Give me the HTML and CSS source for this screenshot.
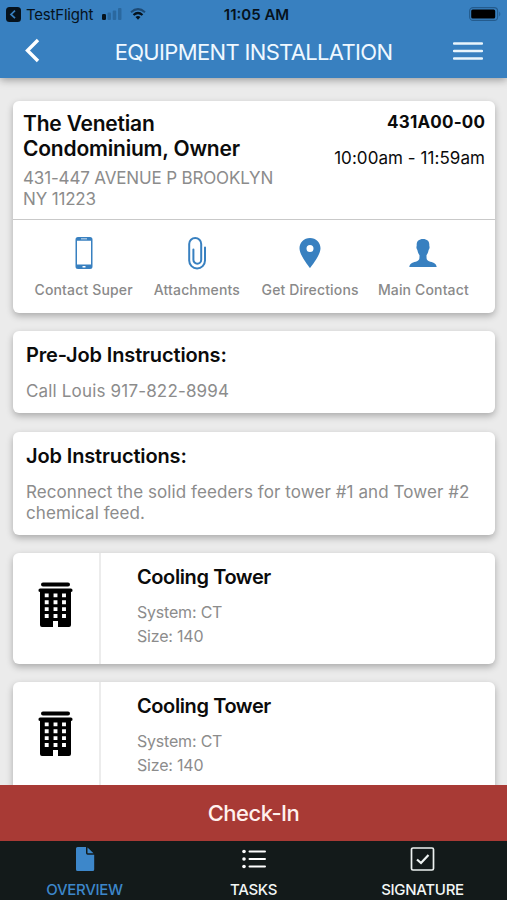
FILE: index.html
```html
<!DOCTYPE html>
<html lang="en">
<head>
<meta charset="utf-8">
<title>Equipment Installation</title>
<link rel="stylesheet" href="styles.css">
</head>
<body>
<header class="header">
  <div class="status">
    <div class="status-left">
      <svg width="15" height="15" viewBox="0 0 15 15"><rect width="15" height="15" rx="3.5" fill="#06121c"/><path d="M9 3.7 5 7.4l4 3.7" fill="none" stroke="#3880c0" stroke-width="1.7"/></svg>
      <span class="app">TestFlight</span>
      <svg class="signal" width="20" height="12" viewBox="0 0 20 12"><rect y="6" width="4" height="6" rx="1.300" fill="#06121c"/><g fill="#2a689f"><rect x="5.5" y="4.500" width="3.5" height="7.500" rx="1"/><rect x="10.7" y="2.500" width="3.5" height="9.500" rx="1"/><rect x="16" width="3.5" height="12" rx="1"/></g></svg>
      <svg class="wifi" width="16" height="12" viewBox="0 0 16 12" fill="none"><path d="M1 4.200Q8-2 15 4.200" stroke="#1d4a75" stroke-width="2"/><path d="M3.500 7Q8 3 12.500 7" stroke="#06121c" stroke-width="2.200"/><path d="M5.500 9Q8 7 10.500 9L8 11.700z" fill="#06121c"/></svg>
    </div>
    <div class="clock">11:05 AM</div>
    <svg class="battery" width="33" height="14" viewBox="0 0 33 14"><rect x=".6" y=".6" width="28" height="12.800" rx="3.500" fill="none" stroke="#245b8d" stroke-width="1.100"/><rect x="2.200" y="2.400" width="24" height="9" rx="1.500" fill="#000"/><path d="M30.300 4.500q2 2.500 0 5z" fill="#245b8d"/></svg>
  </div>
  <div class="bar">
    <svg width="16" height="26" viewBox="0 0 16 26"><path d="M14 2 3.500 12.500 14 23" fill="none" stroke="#fff" stroke-width="3.400"/></svg>
    <h1 class="title">EQUIPMENT INSTALLATION</h1>
    <svg width="30" height="18" viewBox="0 0 30 18"><path d="M1 1.500h28M1 9h28M1 16.500h28" stroke="#e9f5fc" stroke-width="2.300" stroke-linecap="round"/></svg>
  </div>
</header>
<main class="content">
  <section class="card job">
    <div class="job-top">
      <div>
        <h2 class="name">The Venetian<br>Condominium, Owner</h2>
        <p class="address">431-447 AVENUE P BROOKLYN<br>NY 11223</p>
      </div>
      <div class="job-meta">
        <div class="number">431A00-00</div>
        <div class="time">10:00am - 11:59am</div>
      </div>
    </div>
    <div class="actions">
      <div class="action">
        <svg width="34" height="34" viewBox="0 0 34 34"><path fill="#3880c0" fill-rule="evenodd" d="M11 1h12a2.500 2.500 0 0 1 2.500 2.500v27A2.500 2.500 0 0 1 23 33H11a2.500 2.500 0 0 1-2.500-2.500v-27A2.500 2.500 0 0 1 11 1zM10 4.700v23.800h14V4.700zM14 2.500v.8h6v-.8zM15.500 30v1.600h3V30z"/></svg>
        <span>Contact Super</span>
      </div>
      <div class="action">
        <svg width="34" height="34" viewBox="0 0 34 34"><path fill="none" stroke="#3880c0" stroke-width="2" stroke-linecap="round" d="M25 11.500V24.500a7.700 7.700 0 0 1-15.800 0V8a6 6 0 0 1 12 0v15.800a3.900 3.900 0 0 1-7.800 0V13.500"/></svg>
        <span>Attachments</span>
      </div>
      <div class="action">
        <svg width="34" height="34" viewBox="0 0 34 34"><path fill="#3880c0" fill-rule="evenodd" d="M17 2c-6 0-10.500 4.500-10.500 10.300C6.500 19.500 17 32 17 32s10.500-12.500 10.500-19.700C27.500 6.500 23 2 17 2zm0 7a3.500 3.500 0 1 1 0 7 3.500 3.500 0 0 1 0-7z"/></svg>
        <span>Get Directions</span>
      </div>
      <div class="action">
        <svg width="34" height="34" viewBox="0 0 34 34"><path fill="#3880c0" d="M17 3c-4.300 0-6.600 2.500-6.300 6.300.1 1-.5 1.200-.2 2.800.2 1.100.7 1.600 1 2.400.4 2.300 1.200 3.500 2 4.700 0 3.400 0 5-2.500 6C7.500 26.300 3.700 27 3.300 31h27.400c-.4-4-4.200-4.700-7.700-5.800-2.500-1-2.500-2.600-2.500-6 .8-1.200 1.600-2.400 2-4.700.3-.8.800-1.300 1-2.400.3-1.600-.3-1.800-.2-2.800C23.600 5.500 21.300 3 17 3z"/></svg>
        <span>Main Contact</span>
      </div>
    </div>
  </section>
  <section class="card note">
    <h2 class="heading">Pre-Job Instructions:</h2>
    <p class="text call">Call Louis 917-822-8994</p>
  </section>
  <section class="card note note-long">
    <h2 class="heading">Job Instructions:</h2>
    <p class="text">Reconnect the solid feeders for tower #1 and Tower #2<br>chemical feed.</p>
  </section>
  <section class="card unit">
    <div class="unit-icon">
      <svg width="36" height="48" viewBox="0 0 36 48"><path d="M5 1.500h25a2 2 0 0 1 0 4H5a2 2 0 0 1 0-4zM2.500 7.500h30a1.800 1.800 0 0 1 .5 3.600V44a2 2 0 0 1-2 2H20v-6h-5v6H4a2 2 0 0 1-2-2V11.100a1.800 1.800 0 0 1 .5-3.600z"/><path d="M8.700 12.400v25.500M17.500 12.400v25.500M26 12.400v25.500" stroke="#fff" stroke-width="3.900" stroke-dasharray="3.900 3"/></svg>
    </div>
    <div class="unit-body">
      <h2 class="heading tower">Cooling Tower</h2>
      <p class="spec">System: CT<br>Size: 140</p>
    </div>
  </section>
  <section class="card unit">
    <div class="unit-icon">
      <svg width="36" height="48" viewBox="0 0 36 48"><path d="M5 1.500h25a2 2 0 0 1 0 4H5a2 2 0 0 1 0-4zM2.500 7.500h30a1.800 1.800 0 0 1 .5 3.600V44a2 2 0 0 1-2 2H20v-6h-5v6H4a2 2 0 0 1-2-2V11.100a1.800 1.800 0 0 1 .5-3.600z"/><path d="M8.700 12.400v25.500M17.500 12.400v25.500M26 12.400v25.500" stroke="#fff" stroke-width="3.900" stroke-dasharray="3.900 3"/></svg>
    </div>
    <div class="unit-body">
      <h2 class="heading tower">Cooling Tower</h2>
      <p class="spec">System: CT<br>Size: 140</p>
    </div>
  </section>
</main>
<div class="checkin">Check-In</div>
<nav class="tabs">
  <div class="tab active">
    <svg width="26" height="26" viewBox="0 0 26 26"><path fill="#3d87ca" d="M5.500 1H14v6a1.700 1.700 0 0 0 1.700 1.700h6.500v14.800A1.500 1.500 0 0 1 20.700 25H5.500A1.500 1.500 0 0 1 4 23.500v-21A1.500 1.500 0 0 1 5.500 1zM15.500 1.600l6 5.700h-6z"/></svg>
    <span>OVERVIEW</span>
  </div>
  <div class="tab">
    <svg width="26" height="26" viewBox="0 0 26 26"><path d="M8.500 5.500H24M8.500 13H24M8.500 20.500H24" stroke="#fff" stroke-width="2" stroke-linecap="round"/><g fill="#fff"><circle cx="3" cy="5.500" r="1.800"/><circle cx="3" cy="13" r="1.800"/><circle cx="3" cy="20.500" r="1.800"/></g></svg>
    <span>TASKS</span>
  </div>
  <div class="tab">
    <svg width="26" height="26" viewBox="0 0 26 26" fill="none" stroke="#edf2f1"><rect x="1.500" y="2" width="22" height="22" rx="1.500" stroke-width="1.700"/><path d="m7 13.500 4 3.500 7.500-8" stroke-width="2.200"/></svg>
    <span>SIGNATURE</span>
  </div>
</nav>
</body>
</html>
```
FILE: styles.css
```css
* { box-sizing: border-box; }
body {
  margin: 0;
  height: 900px;
  overflow: hidden;
  display: flex;
  flex-direction: column;
  background: #ebebeb;
  font-family: Inter, "Liberation Sans", sans-serif;
  color: #0b0b0b;
}
h1, h2, p { margin: 0; }
svg { display: block; flex: none; }
span, h1, h2, p, .clock, .number, .time, .checkin { white-space: nowrap; }
.header {
  height: 78px;
  flex: none;
  background: #3880c0;
  box-shadow: 0 2px 8px rgba(0, 0, 0, .35);
  z-index: 1;
}
.status {
  height: 28px;
  display: grid;
  grid-template-columns: 1fr auto 1fr;
  align-items: center;
  padding: 0 5px 0 6px;
  color: #06121c;
}
.status-left { display: flex; align-items: center; }
.app { font-size: 15px; margin-left: 5px; letter-spacing: -.2px; }
.signal { margin-left: 9px; }
.wifi { margin-left: 8px; }
.clock { font-size: 15px; font-weight: 600; margin-left: 5px; }
.battery { justify-self: end; }
.bar {
  height: 46px;
  display: flex;
  align-items: center;
  justify-content: space-between;
  padding: 0 24px;
}
.title { font-size: 22px; line-height: 26px; font-weight: 400; color: #eff8ff; letter-spacing: -.66px; margin: 1px 0 0 14px; }
.content {
  flex: 1;
  min-height: 0;
  overflow: hidden;
  display: flex;
  flex-direction: column;
  gap: 18px;
  padding: 23px 12px 0 13px;
}
.card {
  flex: none;
  background: #fff;
  border-radius: 6px;
  box-shadow: 0 3px 7px rgba(0, 0, 0, .28);
}
.job { height: 212px; }
.job-top {
  height: 119px;
  display: flex;
  justify-content: space-between;
  padding: 10px 10px 0;
  border-bottom: 1px solid #c9c9c9;
}
.name { font-size: 21px; line-height: 25px; font-weight: 600; letter-spacing: -.2px; }
.address { font-size: 17px; line-height: 21px; color: #8c8c8c; margin-top: 7px; letter-spacing: -.16px; }
.job-meta { text-align: right; }
.number { font-size: 17px; line-height: 22px; font-weight: 700; letter-spacing: .2px; margin-right: -.2px; }
.time { font-size: 17px; line-height: 22px; margin-top: 14px; letter-spacing: .06px; }
.actions { display: flex; padding: 16px 15px 0 14px; }
.action {
  flex: 1;
  display: flex;
  flex-direction: column;
  align-items: center;
  gap: 11px;
  font-size: 14px;
  line-height: 18px;
  font-weight: 500;
  letter-spacing: .15px;
  color: #8a8a8a;
}
.note { height: 82px; padding: 12px 12px 0 13px; }
.note-long { height: 103px; }
.note + .note { margin-top: 1px; }
.heading { font-size: 20px; line-height: 24px; font-weight: 600; letter-spacing: -.14px; }
.text { font-size: 17px; line-height: 21px; color: #8c8c8c; margin-top: 14px; letter-spacing: .08px; }
.call { letter-spacing: .17px; }
.unit { height: 111px; display: flex; }
.unit-icon { width: 88px; border-right: 2px solid #ececec; display: flex; justify-content: center; padding-top: 28px; }
.unit-body { padding: 12px 0 0 36px; }
.tower { letter-spacing: -.4px; }
.spec { font-size: 16px; line-height: 24px; color: #8c8c8c; margin-top: 11px; letter-spacing: -.2px; }
.checkin {
  flex: none;
  height: 56px;
  line-height: 56px;
  text-align: center;
  font-size: 22px;
  font-weight: 500;
  letter-spacing: -.5px;
  color: #fff1ee;
  background: #a83a35;
}
.tabs {
  flex: none;
  height: 59px;
  display: flex;
  background: #131a1a;
}
.tab {
  flex: 1;
  display: flex;
  flex-direction: column;
  align-items: center;
  gap: 8px;
  padding-top: 5px;
  font-size: 15px;
  line-height: 20px;
  font-weight: 500;
  letter-spacing: -.3px;
  color: #f2f6f5;
}
.active { color: #3d87ca; }
```
